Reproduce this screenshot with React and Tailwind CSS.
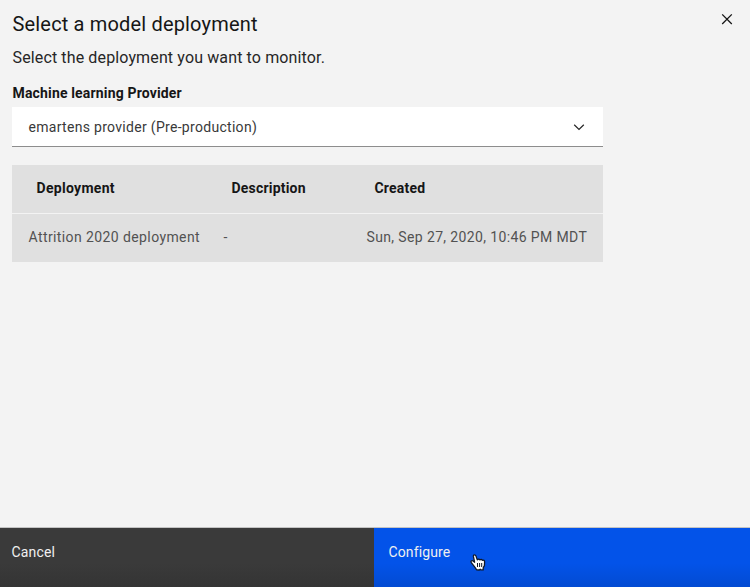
function Close() {
  return (
    <svg width="12" height="12" viewBox="0 0 12 12" fill="none" stroke="#161616" strokeWidth="1.3">
      <path d="M1.2 1.4 L10.8 11 M10.8 1.4 L1.2 11" />
    </svg>
  );
}

function Chevron() {
  return (
    <svg width="12" height="8" viewBox="0 0 12 8" fill="none" stroke="#262626" strokeWidth="1.2">
      <path d="M1.2 1.7 L6 6.4 L10.8 1.7" />
    </svg>
  );
}

function HandCursor() {
  return (
    <svg className="absolute left-[470px] top-[553px]" width="17" height="19" viewBox="0 0 17 19">
      <path
        d="M4.6 9.2 L3.4 3.4 C3.1 1.6 5.3 1.2 5.9 2.9 L7.3 6.9 C8 5.9 9.4 6.1 9.9 6.9 C10.8 6.1 12 6.5 12.4 7.3 C13.6 6.8 14.6 7.5 14.6 8.8 L14.4 12.6 L13.2 14.7 L13.2 16.9 L10.9 16.9 L10.2 16.3 L9.4 17 L6.6 16.9 C5.8 14.6 2.6 11.6 1.2 9.3 C.6 7.8 2.1 7.1 3.1 8 Z"
        fill="#fff"
        stroke="#101828"
        strokeWidth="1.3"
        strokeLinejoin="round"
      />
      <path d="M7.5 10 V14 M9.6 10 V14 M11.7 10 V14" stroke="#101828" strokeWidth="1" />
    </svg>
  );
}

export default function App() {
  return (
    <div className="relative flex h-[587px] w-[750px] flex-col overflow-hidden whitespace-nowrap bg-[#f3f3f3] font-['Roboto',sans-serif] text-[14px] leading-5 text-[#161616]">
      <main className="flex-1 pl-3">
        <header className="flex h-[39px] items-start justify-between pr-[17px]">
          <h1 className="pl-[0.5px] pt-[10px] text-[20px] leading-7 tracking-[0.17px]">Select a model deployment</h1>
          <button aria-label="Close" className="pt-[13px]"><Close /></button>
        </header>
        <p className="mt-[7px] pl-[0.5px] text-[16px] leading-6 tracking-[0.13px] text-[#262626]">
          Select the deployment you want to monitor.
        </p>
        <div className="w-[591px]">
          <div className="mt-[13px] pl-[0.5px] text-[14px] font-bold tracking-[0.16px]">Machine learning Provider</div>
          <div className="mt-1 flex h-10 items-center justify-between border-b border-[#8d8d8d] bg-white pl-[16.5px] pr-[18px] text-[#393939]">
            <span className="tracking-[0.3px]">emartens provider (Pre-production)</span>
            <Chevron />
          </div>
          <div className="mt-[18px] bg-[#e0e0e0]">
            <div className="grid h-12 grid-cols-[195px_143px_1fr] items-center pb-[2px] pl-[24.5px] font-bold tracking-[0.2px]">
              <span className="tracking-[0.3px]">Deployment</span>
              <span>Description</span>
              <span>Created</span>
            </div>
            <div className="grid h-[49px] grid-cols-[195px_143px_1fr] items-center border-t border-[#f3f3f3] pb-[2px] pl-[16.5px] text-[#525252]">
              <span className="tracking-[0.4px]">Attrition 2020 deployment</span>
              <span>-</span>
              <span className="tracking-[0.37px]">Sun, Sep 27, 2020, 10:46 PM MDT</span>
            </div>
          </div>
        </div>
      </main>
      <footer className="flex h-[60px] border-t border-[#c3c3c3] text-[#f0f0f0]">
        <button className="flex w-[374px] items-start bg-gradient-to-b from-[#3a3a3a] from-60% to-[#343434] pl-[11.5px] pt-[14px] tracking-[0.18px]">Cancel</button>
        <button className="flex flex-1 cursor-pointer items-start bg-gradient-to-b from-[#0353e9] from-60% to-[#034bd2] pl-[14.5px] pt-[14px] tracking-[0.12px]">Configure</button>
      </footer>
      <HandCursor />
    </div>
  );
}
